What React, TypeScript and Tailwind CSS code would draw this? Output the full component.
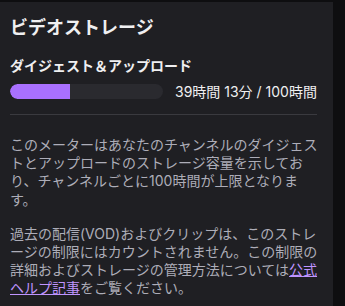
import React from 'react';

const font = { fontFamily: 'Inter, "Noto Sans CJK JP", sans-serif' };

export default function App() {
  const used = 39 + 13 / 60;
  return (
    <div className="w-[345px] h-[306px] bg-[#0e0e10] pt-[2px]" style={font}>
      <div className="w-[333px] h-[304px] bg-[#1f1f23] pl-[10px] pr-[15px] pt-[12px]">
        <h2 className="text-[18px] leading-[27px] text-[#efeff1] font-semibold">ビデオストレージ</h2>
        <h3 className="mt-[16px] text-[14px] leading-[18px] font-bold text-[#efeff1]">ダイジェスト＆アップロード</h3>
        <div className="mt-[6px] flex items-center">
          <div className="w-[153px] h-[15px] rounded-full bg-[#2a2a2f] overflow-hidden">
            <div className="h-full bg-[#a970ff] rounded-l-full" style={{ width: `${(used / 100) * 153}px` }} />
          </div>
          <span className="ml-[12px] text-[14px] text-[#efeff1]">39時間 13分 / 100時間</span>
        </div>
        <div className="mt-[12px] mr-[1px] h-px bg-[#3a3a3f]" />
        <p className="mt-[21px] text-[14px] leading-[18.2px] text-[#adadb8] whitespace-nowrap">
          このメーターはあなたのチャンネルのダイジェス<br />
          トとアップロードのストレージ容量を示してお<br />
          り、チャンネルごとに100時間が上限となりま<br />
          す。
        </p>
        <p className="mt-[16px] text-[14px] leading-[18.2px] text-[#adadb8]">
          過去の配信(VOD)およびクリップは、このストレージの制限にはカウントされません。この制限の詳細およびストレージの管理方法については
          <a href="#" className="text-[#bf94ff] underline">公式ヘルプ記事</a>
          をご覧ください。
        </p>
      </div>
    </div>
  );
}
